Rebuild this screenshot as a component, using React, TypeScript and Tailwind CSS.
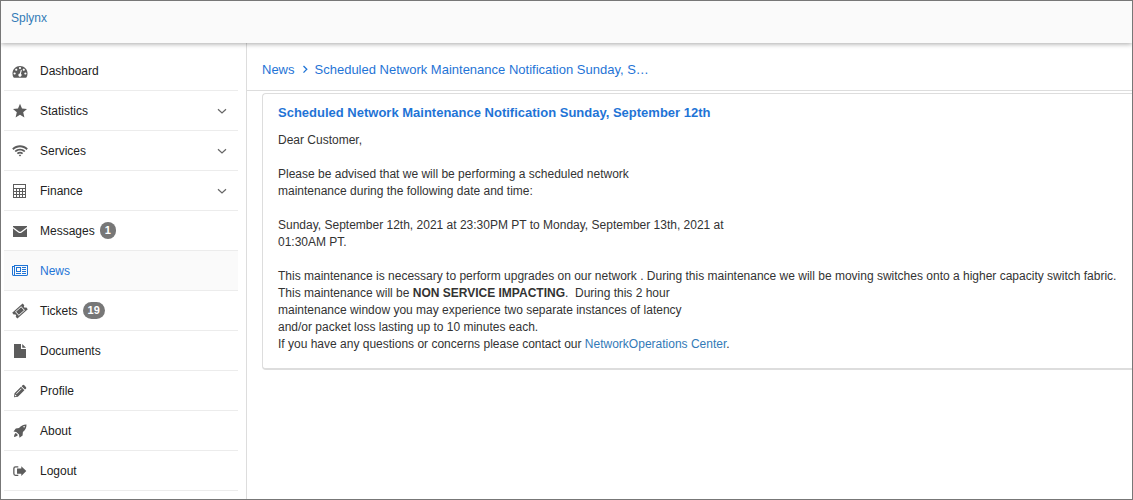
import type { ReactNode } from "react";

type IconProps = { viewBox?: string; className?: string; children: ReactNode };

function Icon({ viewBox = "0 0 16 16", className = "size-4", children }: IconProps) {
  return (
    <svg viewBox={viewBox} className={className} fill="currentColor" aria-hidden="true">
      {children}
    </svg>
  );
}

const icons = {
  dashboard: (
    <Icon viewBox="64 64 1664 1664">
      <path d="M384 1152q0-53-37.5-90.5t-90.5-37.5-90.5 37.5-37.5 90.5 37.5 90.5 90.5 37.5 90.5-37.5 37.5-90.5zm192-448q0-53-37.5-90.5t-90.5-37.5-90.5 37.5-37.5 90.5 37.5 90.5 90.5 37.5 90.5-37.5 37.5-90.5zm428 481l101-382q6-26-7.5-48.5t-38.5-29.5-48 6.5-30 39.5l-101 382q-60 5-107 43.5t-63 98.5q-20 77 20 146t117 89 146-20 89-117q16-60-6-117t-72-91zm660-33q0-53-37.5-90.5t-90.5-37.5-90.5 37.5-37.5 90.5 37.5 90.5 90.5 37.5 90.5-37.5 37.5-90.5zm-640-640q0-53-37.5-90.5t-90.5-37.5-90.5 37.5-37.5 90.5 37.5 90.5 90.5 37.5 90.5-37.5 37.5-90.5zm448 192q0-53-37.5-90.5t-90.5-37.5-90.5 37.5-37.5 90.5 37.5 90.5 90.5 37.5 90.5-37.5 37.5-90.5zm320 448q0 261-141 483-19 29-54 29h-1402q-35 0-54-29-141-221-141-483 0-182 71-348t191-286 286-191 348-71 348 71 286 191 191 286 71 348z" transform="translate(112 144) scale(.875)" />
    </Icon>
  ),
  star: (
    <Icon>
      <path d="M8 .8l2 4.700 5 .4-3.800 3.400 1.200 5.100L8 11.800l-4.400 2.600 1.200-5.100L1 5.900l5-.4z" />
    </Icon>
  ),
  wifi: (
    <Icon>
      <path d="M.2 5.600C4.600 1.200 11.400 1.200 15.800 5.600L14.500 6.900C10.800 3.300 5.200 3.300 1.500 6.900zM2.600 7.900c3-2.900 7.800-2.900 10.800 0L12.200 9.100c-2.400-2.200-6-2.200-8.400 0zM4.800 10.100c1.800-1.700 4.600-1.700 6.400 0L10 11.300c-1.100-1-2.900-1-4 0zM6.800 12.200c.7-.6 1.700-.6 2.400 0L8 13.500z" />
    </Icon>
  ),
  calculator: (
    <Icon>
      <path fillRule="evenodd" d="M1 1h13v14H1zM2 2v3h11V2zM2 6v2h2V6zm3 0v2h2V6zm3 0v2h2V6zm3 0v2h2V6zM2 9v2h2V9zm3 0v2h2V9zm3 0v2h2V9zm3 0v2h2V9zM2 12v2h2v-2zm3 0v2h2v-2zm3 0v2h2v-2zm3 0v2h2v-2z" />
    </Icon>
  ),
  envelope: (
    <Icon>
      <path d="M1 3h14v1L9 8.500q-1 .7-2 0L1 4zM1 5.400l5.200 4q1.800 1.300 3.600 0l5.200-4V14H1z" />
    </Icon>
  ),
  newspaper: (
    <Icon viewBox="0 0 2048 1792">
      <path d="M1024 512h-384v384h384v-384zm128 640v128h-640v-128h640zm0-768v640h-640v-640h640zm640 768v128h-512v-128h512zm0-256v128h-512v-128h512zm0-256v128h-512v-128h512zm0-256v128h-512v-128h512zm-1536 960v-960h-128v960q0 26 19 45t45 19 45-19 19-45zm1664 0v-1088h-1536v1088q0 33-11 64h1483q26 0 45-19t19-45zm128-1216v1216q0 80-56 136t-136 56h-1664q-80 0-136-56t-56-136v-1088h256v-128h1792z" />
    </Icon>
  ),
  ticket: (
    <Icon>
      <g transform="rotate(-42 8 8)">
        <path fillRule="evenodd" d="M1 4.100h14v2.600a1.300 1.300 0 0 0 0 2.600v2.600H1V9.300a1.300 1.300 0 0 0 0-2.600zM3.900 5.200v5.600h8.200V5.200zM4.600 5.900h6.800v4.200H4.600z" />
      </g>
    </Icon>
  ),
  file: (
    <Icon>
      <path d="M2 1h7v5h5v9H2zM10.200 1L14 4.800h-3.800z" />
    </Icon>
  ),
  pencil: (
    <Icon>
      <path
        fillRule="evenodd"
        d="M10.500 2.300a1.300 1.300 0 0 1 1.800 0l1.600 1.600a1.300 1.300 0 0 1 0 1.800l-.9.900-3.400-3.400zM9 3.800l3.400 3.400-6.500 6.500L2 14.300l.5-4zM9.100 5.400l-5 5 .5.500 5-5zM3.200 11.500l-.3 1.800 1.800-.3z"
      />
    </Icon>
  ),
  rocket: (
    <Icon>
      <path
        fillRule="evenodd"
        d="M14.500 1.500c.1 3.300-1.200 5.500-3.600 7.500l-.3 3.500-3.100 2.300-.5-3.300-2.700-2.600L1.500 8.400l2.300-3L7 5.100C9.200 2.600 11.300 1.400 14.500 1.500zM12.100 3a.8.8 0 1 0 0 1.600.8.8 0 0 0 0-1.600zM3.900 10.100l2 2C5.300 13.300 3.800 13.700 2 14c.2-1.900.6-3.300 1.900-3.900z"
      />
    </Icon>
  ),
  logout: (
    <Icon>
      <path d="M6.300 3.300H3.500A2.300 2.300 0 0 0 1.200 5.600v5a2.300 2.300 0 0 0 2.300 2.300h2.800v-1.200H3.700a1.200 1.200 0 0 1-1.200-1.200V5.700a1.200 1.200 0 0 1 1.200-1.200h2.600zM9.300 3.300v2.200H5v5.200h4.300v2.200l5-4.800z" />
    </Icon>
  ),
};

type Item = {
  label: string;
  icon: keyof typeof icons;
  badge?: number;
  expandable?: boolean;
  active?: boolean;
};

const items: Item[] = [
  { label: "Dashboard", icon: "dashboard" },
  { label: "Statistics", icon: "star", expandable: true },
  { label: "Services", icon: "wifi", expandable: true },
  { label: "Finance", icon: "calculator", expandable: true },
  { label: "Messages", icon: "envelope", badge: 1 },
  { label: "News", icon: "newspaper", active: true },
  { label: "Tickets", icon: "ticket", badge: 19 },
  { label: "Documents", icon: "file" },
  { label: "Profile", icon: "pencil" },
  { label: "About", icon: "rocket" },
  { label: "Logout", icon: "logout" },
];

function MenuItem({ label, icon, badge, expandable, active }: Item) {
  const body = (
    <>
      <span className={active ? "text-[#1f74d6]" : "text-[#5c5c5c]"}>{icons[icon]}</span>
      <span className="ml-3 pt-0.5">{label}</span>
      {badge !== undefined && (
        <span className="ml-[5px] rounded-full bg-[#777] px-[5px] text-center text-[11px] font-bold text-white">
          {badge}
        </span>
      )}
      {expandable && (
        <svg viewBox="0 0 10 10" className="ml-auto size-2.5 text-[#666]" fill="none" stroke="currentColor" strokeWidth="1.2" aria-hidden="true">
          <path d="M1 3.200l4 3.800 4-3.800" />
        </svg>
      )}
    </>
  );
  const row = "flex h-full w-full items-center pr-[11px] pl-2 text-left";
  return (
    <li className={`h-10 border-b border-[#ececec] ${active ? "bg-[#fafafa] text-[#1f74d6]" : "text-[#222]"}`}>
      {expandable ? (
        <button type="button" aria-expanded="false" className={row}>{body}</button>
      ) : (
        <a href="#" aria-current={active ? "page" : undefined} className={row}>{body}</a>
      )}
    </li>
  );
}

export default function App() {
  return (
    <div className="flex min-h-screen flex-col overflow-hidden border border-[#777] bg-white font-['Liberation_Sans',Arial,sans-serif] text-[12px] leading-[17px] text-[#333]">
      <header className="relative h-[42px] bg-[#fafafa] px-2.5 py-[9px] shadow-[0_1px_5px_rgba(0,0,0,0.35)]">
        <a href="#" className="text-[#337ab7]">Splynx</a>
      </header>
      <div className="flex flex-1">
        <nav aria-label="Main menu" className="w-[246px] shrink-0 border-r border-[#ddd] pt-2 pr-2 pl-[3px]">
          <ul>
            {items.map((item) => (
              <MenuItem key={item.label} {...item} />
            ))}
          </ul>
        </nav>
        <main className="min-w-0 flex-1">
          <nav aria-label="Breadcrumb" className="flex h-12 items-center border-b border-[#ddd] px-[15px] pt-1.5 text-[13px] text-[#1f74d6]">
            <a href="#">News</a>
            <svg viewBox="0 0 8 10" className="mx-1.5 h-2.5 w-2" fill="none" stroke="currentColor" strokeWidth="1.3" aria-hidden="true">
              <path d="M2.500 1l3.300 3.300-3.300 3.300" />
            </svg>
            <a href="#">Scheduled Network Maintenance Notification Sunday, S…</a>
          </nav>
          <article className="mt-0.5 ml-[15px] rounded-l border border-r-0 border-b-2 border-[#ddd] px-[15px] pt-2.5 pb-[15px]">
            <h1 className="mb-[11px] text-[13px] font-bold text-[#1f74d6]">
              <a href="#">Scheduled Network Maintenance Notification Sunday, September 12th</a>
            </h1>
            <p className="mb-[17px]">Dear Customer,</p>
            <p className="mb-[17px]">
              Please be advised that we will be performing a scheduled network
              <br />
              maintenance during the following date and time:
            </p>
            <p className="mb-[17px]">
              Sunday, September 12th, 2021 at 23:30PM PT to Monday, September 13th, 2021 at
              <br />
              01:30AM PT.
            </p>
            <p>
              This maintenance is necessary to perform upgrades on our network . During this maintenance we will be moving switches onto a higher capacity switch fabric.
              <br />
              This maintenance will be <strong>NON SERVICE IMPACTING</strong>.&nbsp; During this 2 hour
              <br />
              maintenance window you may experience two separate instances of latency
              <br />
              and/or packet loss lasting up to 10 minutes each.
              <br />
              If you have any questions or concerns please contact our{" "}
              <a href="#" className="text-[#337ab7]">NetworkOperations Center</a>.
            </p>
          </article>
        </main>
      </div>
    </div>
  );
}
